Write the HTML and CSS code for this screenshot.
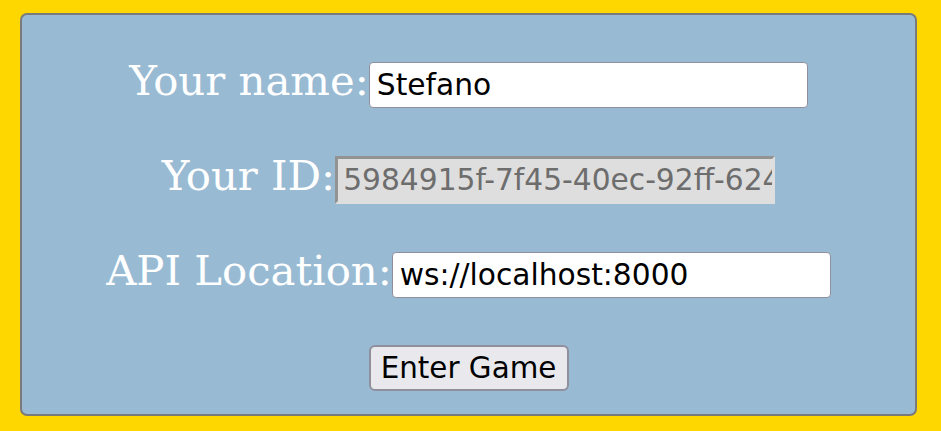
FILE: index.html
```html
<!DOCTYPE html>
<html>
<head>
<meta charset="utf-8">
<link rel="stylesheet" href="styles.css">
</head>
<body>
<div class="panel">
  <div class="row"><label class="lbl">Your name:</label><input class="field" type="text" value="Stefano"></div>
  <div class="row"><label class="lbl">Your ID:</label><input class="field field-id" type="text" value="5984915f-7f45-40ec-92ff-6244e1b7c3d2" disabled></div>
  <div class="row"><label class="lbl">API Location:</label><input class="field" type="text" value="ws://localhost:8000"></div>
  <div class="row row-btn"><button class="btn">Enter Game</button></div>
</div>
</body>
</html>
```
FILE: styles.css
```css
html, body {
  margin: 0;
  padding: 0;
  background: #ffd700;
}
body {
  padding: 13px 24px 15px 20px;
  height: 431px;
  box-sizing: border-box;
}
.panel {
  background: #98bad3;
  border: 2px solid #7a7a7a;
  border-radius: 7px;
  height: 100%;
  box-sizing: border-box;
  padding-top: 47px;
}
.row {
  display: flex;
  justify-content: center;
  align-items: center;
  height: 45px;
  margin-bottom: 50px;
}
.lbl {
  font-family: "DejaVu Serif", serif;
  font-size: 41.8px;
  line-height: 45px;
  color: #fff;
  padding-bottom: 8px;
}
.field {
  font-family: "DejaVu Sans", sans-serif;
  font-size: 29.7px;
  width: 439px;
  height: 46px;
  box-sizing: border-box;
  border: 1px solid #8f8f9d;
  border-radius: 4px;
  padding: 0 7px;
  background: #fff;
  color: #000;
  margin: 0;
}
.field-id {
  border: 3px solid;
  border-color: #939393 #dedede #dedede #939393;
  border-radius: 0;
  background: #dedede;
  color: #6d6d6d;
  height: 48px;
  width: 440px;
  padding: 0 0 0 5px;
}
.row-btn {
  margin-top: -2px;
}
.btn {
  font-family: "DejaVu Sans", sans-serif;
  font-size: 29.4px;
  width: 200px;
  height: 46px;
  background: #e9e9ed;
  border: 2px solid #8f8f9d;
  border-radius: 6px;
  color: #000;
  padding: 0;
}
```
